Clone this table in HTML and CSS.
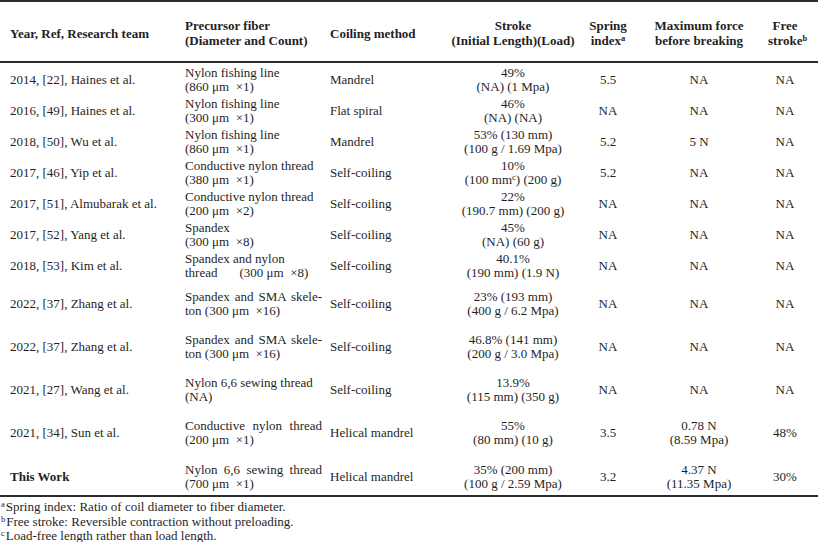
FILE: index.html
```html
<!DOCTYPE html>
<html lang="en">
<head>
    <meta charset="UTF-8">
    <meta name="viewport" content="width=device-width, initial-scale=1.0">
    <title>Comparison of coiled fiber actuators</title>
    <link rel="stylesheet" href="styles.css">
</head>
<body>
    <table class="comparison">
        <thead>
            <tr>
                <th class="ref">Year, Ref, Research team</th>
                <th class="fiber">Precursor fiber<br>(Diameter and Count)</th>
                <th class="method">Coiling method</th>
                <th class="stroke">Stroke<br>(Initial Length)(Load)</th>
                <th class="index">Spring<br>index<sup>a</sup></th>
                <th class="force">Maximum force<br>before breaking</th>
                <th class="free">Free<br>stroke<sup>b</sup></th>
            </tr>
        </thead>
        <tbody>
            <tr class="short">
                <td class="ref">2014, [22], Haines et al.</td>
                <td class="fiber">Nylon fishing line<br>(860 μm&ensp;×1)</td>
                <td class="method">Mandrel</td>
                <td>49%<br>(NA) (1 Mpa)</td>
                <td>5.5</td>
                <td>NA</td>
                <td class="free">NA</td>
            </tr>
            <tr class="short">
                <td class="ref">2016, [49], Haines et al.</td>
                <td class="fiber">Nylon fishing line<br>(300 μm&ensp;×1)</td>
                <td class="method">Flat spiral</td>
                <td>46%<br>(NA) (NA)</td>
                <td>NA</td>
                <td>NA</td>
                <td class="free">NA</td>
            </tr>
            <tr class="short">
                <td class="ref">2018, [50], Wu et al.</td>
                <td class="fiber">Nylon fishing line<br>(860 μm&ensp;×1)</td>
                <td class="method">Mandrel</td>
                <td>53% (130 mm)<br>(100 g / 1.69 Mpa)</td>
                <td>5.2</td>
                <td>5 N</td>
                <td class="free">NA</td>
            </tr>
            <tr class="short">
                <td class="ref">2017, [46], Yip et al.</td>
                <td class="fiber">Conductive nylon thread<br>(380 μm&ensp;×1)</td>
                <td class="method">Self-coiling</td>
                <td>10%<br>(100 mm<sup>c</sup>) (200 g)</td>
                <td>5.2</td>
                <td>NA</td>
                <td class="free">NA</td>
            </tr>
            <tr class="short">
                <td class="ref">2017, [51], Almubarak et al.</td>
                <td class="fiber">Conductive nylon thread<br>(200 μm&ensp;×2)</td>
                <td class="method">Self-coiling</td>
                <td>22%<br>(190.7 mm) (200 g)</td>
                <td>NA</td>
                <td>NA</td>
                <td class="free">NA</td>
            </tr>
            <tr class="short">
                <td class="ref">2017, [52], Yang et al.</td>
                <td class="fiber">Spandex<br>(300 μm&ensp;×8)</td>
                <td class="method">Self-coiling</td>
                <td>45%<br>(NA) (60 g)</td>
                <td>NA</td>
                <td>NA</td>
                <td class="free">NA</td>
            </tr>
            <tr class="short">
                <td class="ref">2018, [53], Kim et al.</td>
                <td class="fiber">Spandex and nylon<br>thread<span class="gap"></span>(300 μm&ensp;×8)</td>
                <td class="method">Self-coiling</td>
                <td>40.1%<br>(190 mm) (1.9 N)</td>
                <td>NA</td>
                <td>NA</td>
                <td class="free">NA</td>
            </tr>
            <tr class="tall">
                <td class="ref">2022, [37], Zhang et al.</td>
                <td class="fiber"><span class="just">Spandex and SMA skele-</span>ton (300 μm&ensp;×16)</td>
                <td class="method">Self-coiling</td>
                <td>23% (193 mm)<br>(400 g / 6.2 Mpa)</td>
                <td>NA</td>
                <td>NA</td>
                <td class="free">NA</td>
            </tr>
            <tr class="tall">
                <td class="ref">2022, [37], Zhang et al.</td>
                <td class="fiber"><span class="just">Spandex and SMA skele-</span>ton (300 μm&ensp;×16)</td>
                <td class="method">Self-coiling</td>
                <td>46.8% (141 mm)<br>(200 g / 3.0 Mpa)</td>
                <td>NA</td>
                <td>NA</td>
                <td class="free">NA</td>
            </tr>
            <tr class="tall">
                <td class="ref">2021, [27], Wang et al.</td>
                <td class="fiber">Nylon 6,6 sewing thread<br>(NA)</td>
                <td class="method">Self-coiling</td>
                <td>13.9%<br>(115 mm) (350 g)</td>
                <td>NA</td>
                <td>NA</td>
                <td class="free">NA</td>
            </tr>
            <tr class="tall">
                <td class="ref">2021, [34], Sun et al.</td>
                <td class="fiber"><span class="just">Conductive nylon thread</span>(200 μm&ensp;×1)</td>
                <td class="method">Helical mandrel</td>
                <td>55%<br>(80 mm) (10 g)</td>
                <td>3.5</td>
                <td>0.78 N<br>(8.59 Mpa)</td>
                <td class="free">48%</td>
            </tr>
            <tr class="tall last">
                <td class="ref"><strong>This Work</strong></td>
                <td class="fiber"><span class="just">Nylon 6,6 sewing thread</span>(700 μm&ensp;×1)</td>
                <td class="method">Helical mandrel</td>
                <td>35% (200 mm)<br>(100 g / 2.59 Mpa)</td>
                <td>3.2</td>
                <td>4.37 N<br>(11.35 Mpa)</td>
                <td class="free">30%</td>
            </tr>
        </tbody>
    </table>

    <div class="notes">
        <p><sup>a</sup>Spring index: Ratio of coil diameter to fiber diameter.</p>
        <p><sup>b</sup>Free stroke: Reversible contraction without preloading.</p>
        <p><sup>c</sup>Load-free length rather than load length.</p>
    </div>
</body>
</html>
```

FILE: styles.css
```css
body {
    margin: 0;
    background-color: white;
    color: #1f1f1f;
    font-family: "Liberation Serif", "Times New Roman", serif;
    font-size: 13px;
    line-height: 14.5px;
}
.comparison {
    width: 818px;
    border-collapse: separate;
    border-spacing: 0;
    table-layout: fixed;
    line-height: 14px;
}
.comparison th,
.comparison td {
    box-sizing: border-box;
    padding: 3px 0 0 0;
    text-align: center;
    vertical-align: middle;
    white-space: nowrap;
}
.comparison th {
    height: 63px;
    font-weight: bold;
    line-height: 15px;
    border-top: 2px solid #2b2b2b;
    border-bottom: 2px solid #2b2b2b;
}
.comparison th.ref,
.comparison th.fiber,
.comparison th.method,
.comparison td.ref,
.comparison td.fiber,
.comparison td.method {
    text-align: left;
}
.ref {
    width: 185px;
    padding-left: 10px !important;
}
.fiber {
    width: 145px;
    padding-right: 8px !important;
}
.method {
    width: 110px;
}
.stroke {
    width: 146px;
}
.index {
    width: 44px;
}
.force {
    width: 138px;
}
.free {
    width: 50px;
    padding-right: 16px !important;
}
.short {
    height: 31px;
}
.tall {
    height: 43px;
}
.tall td {
    padding-top: 5px;
}
.last {
    height: 45px;
}
.last td {
    padding-top: 6px;
    border-bottom: 2px solid #2b2b2b;
}
.just {
    display: block;
    text-align: justify;
    text-align-last: justify;
}
.gap {
    display: inline-block;
    width: 22px;
}
sup {
    font-size: 8.5px;
    line-height: 0;
    vertical-align: 4px;
}
.notes {
    margin-top: 3px;
}
.notes p {
    margin: 0;
    padding-left: 1px;
}
.notes sup {
    margin-right: 1px;
}
```
